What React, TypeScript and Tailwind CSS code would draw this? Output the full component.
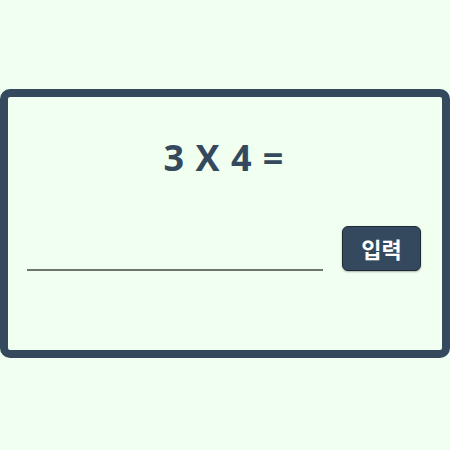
const App = () => {
  return (
    <div className="min-h-[450px] w-full bg-[#f0fff0] pt-[89px] font-['Open_Sans','Noto_Sans_CJK_KR',sans-serif]">
      {/* Quiz card */}
      <div className="h-[269px] w-full rounded-[10px] border-8 border-[#34495e] bg-[#f0fff0]">
        <div className="flex h-[79px] items-end justify-center pr-[2px]">
          <h1 className="text-[36px] font-bold leading-none tracking-[1px] text-[#34495e]">3 X 4 =</h1>
        </div>

        {/* Answer row */}
        <div className="mt-[50px] flex items-end gap-[19px] pl-[19px] pr-[21px]">
          <input
            type="text"
            className="h-[36px] flex-1 border-b-2 border-[#6d756c] bg-transparent text-lg outline-none"
          />
          <button className="h-[45px] w-[79px] rounded-[6px] border border-[#1f2a36] bg-[#34495e] text-[22px] font-bold text-white font-['Noto_Sans_CJK_KR',sans-serif] shadow-[0_1px_2px_rgba(0,0,0,0.3)]">
            입력
          </button>
        </div>
      </div>
    </div>
  );
};

export default App;
